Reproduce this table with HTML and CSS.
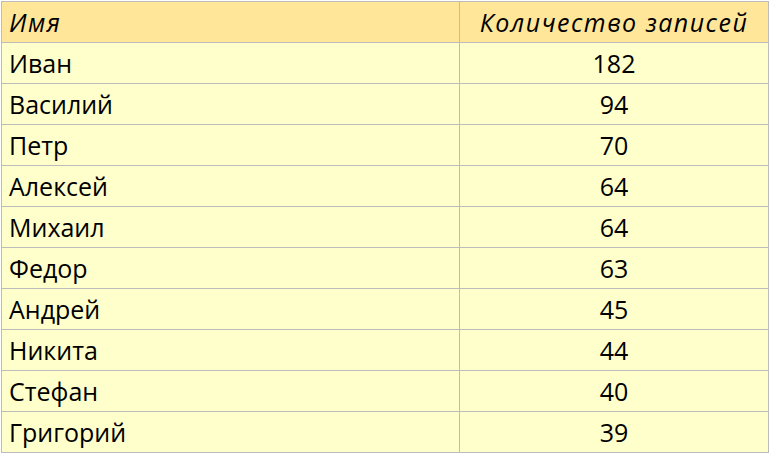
FILE: index.html
```html
<!DOCTYPE html>
<html lang="ru">
<head>
<meta charset="utf-8">
<link rel="stylesheet" href="styles.css">
</head>
<body>
<div class="sheet">
  <table class="grid">
    <thead>
      <tr class="head">
        <th class="name">Имя</th>
        <th class="count">Количество записей</th>
      </tr>
    </thead>
    <tbody>
      <tr><td class="name">Иван</td><td class="count">182</td></tr>
      <tr><td class="name">Василий</td><td class="count">94</td></tr>
      <tr><td class="name">Петр</td><td class="count">70</td></tr>
      <tr><td class="name">Алексей</td><td class="count">64</td></tr>
      <tr><td class="name">Михаил</td><td class="count">64</td></tr>
      <tr><td class="name">Федор</td><td class="count">63</td></tr>
      <tr><td class="name">Андрей</td><td class="count">45</td></tr>
      <tr><td class="name">Никита</td><td class="count">44</td></tr>
      <tr><td class="name">Стефан</td><td class="count">40</td></tr>
      <tr><td class="name">Григорий</td><td class="count">39</td></tr>
    </tbody>
  </table>
</div>
</body>
</html>
```

FILE: styles.css
```css
html, body {
  margin: 0;
  padding: 0;
  background: #ffffff;
}
.sheet {
  padding: 1px 0 0 1px;
}
.grid {
  border-collapse: collapse;
  font-family: "Open Sans", "Noto Sans", sans-serif;
  font-size: 25px;
  font-weight: 500;
  color: #000;
}
.grid th, .grid td {
  border: 1px solid #bcbcbc;
  height: 40px;
  padding: 0 0 0 7px;
  box-sizing: border-box;
  line-height: 40px;
  background: #ffffcc;
  font-weight: 500;
}
.grid .name {
  width: 458px;
  text-align: left;
}
.grid .count {
  width: 309px;
  text-align: center;
  padding: 0;
}
.grid .head th {
  background: #ffe699;
  font-style: italic;
  letter-spacing: 1.5px;
}
.grid td {
  height: 41px;
}
```
